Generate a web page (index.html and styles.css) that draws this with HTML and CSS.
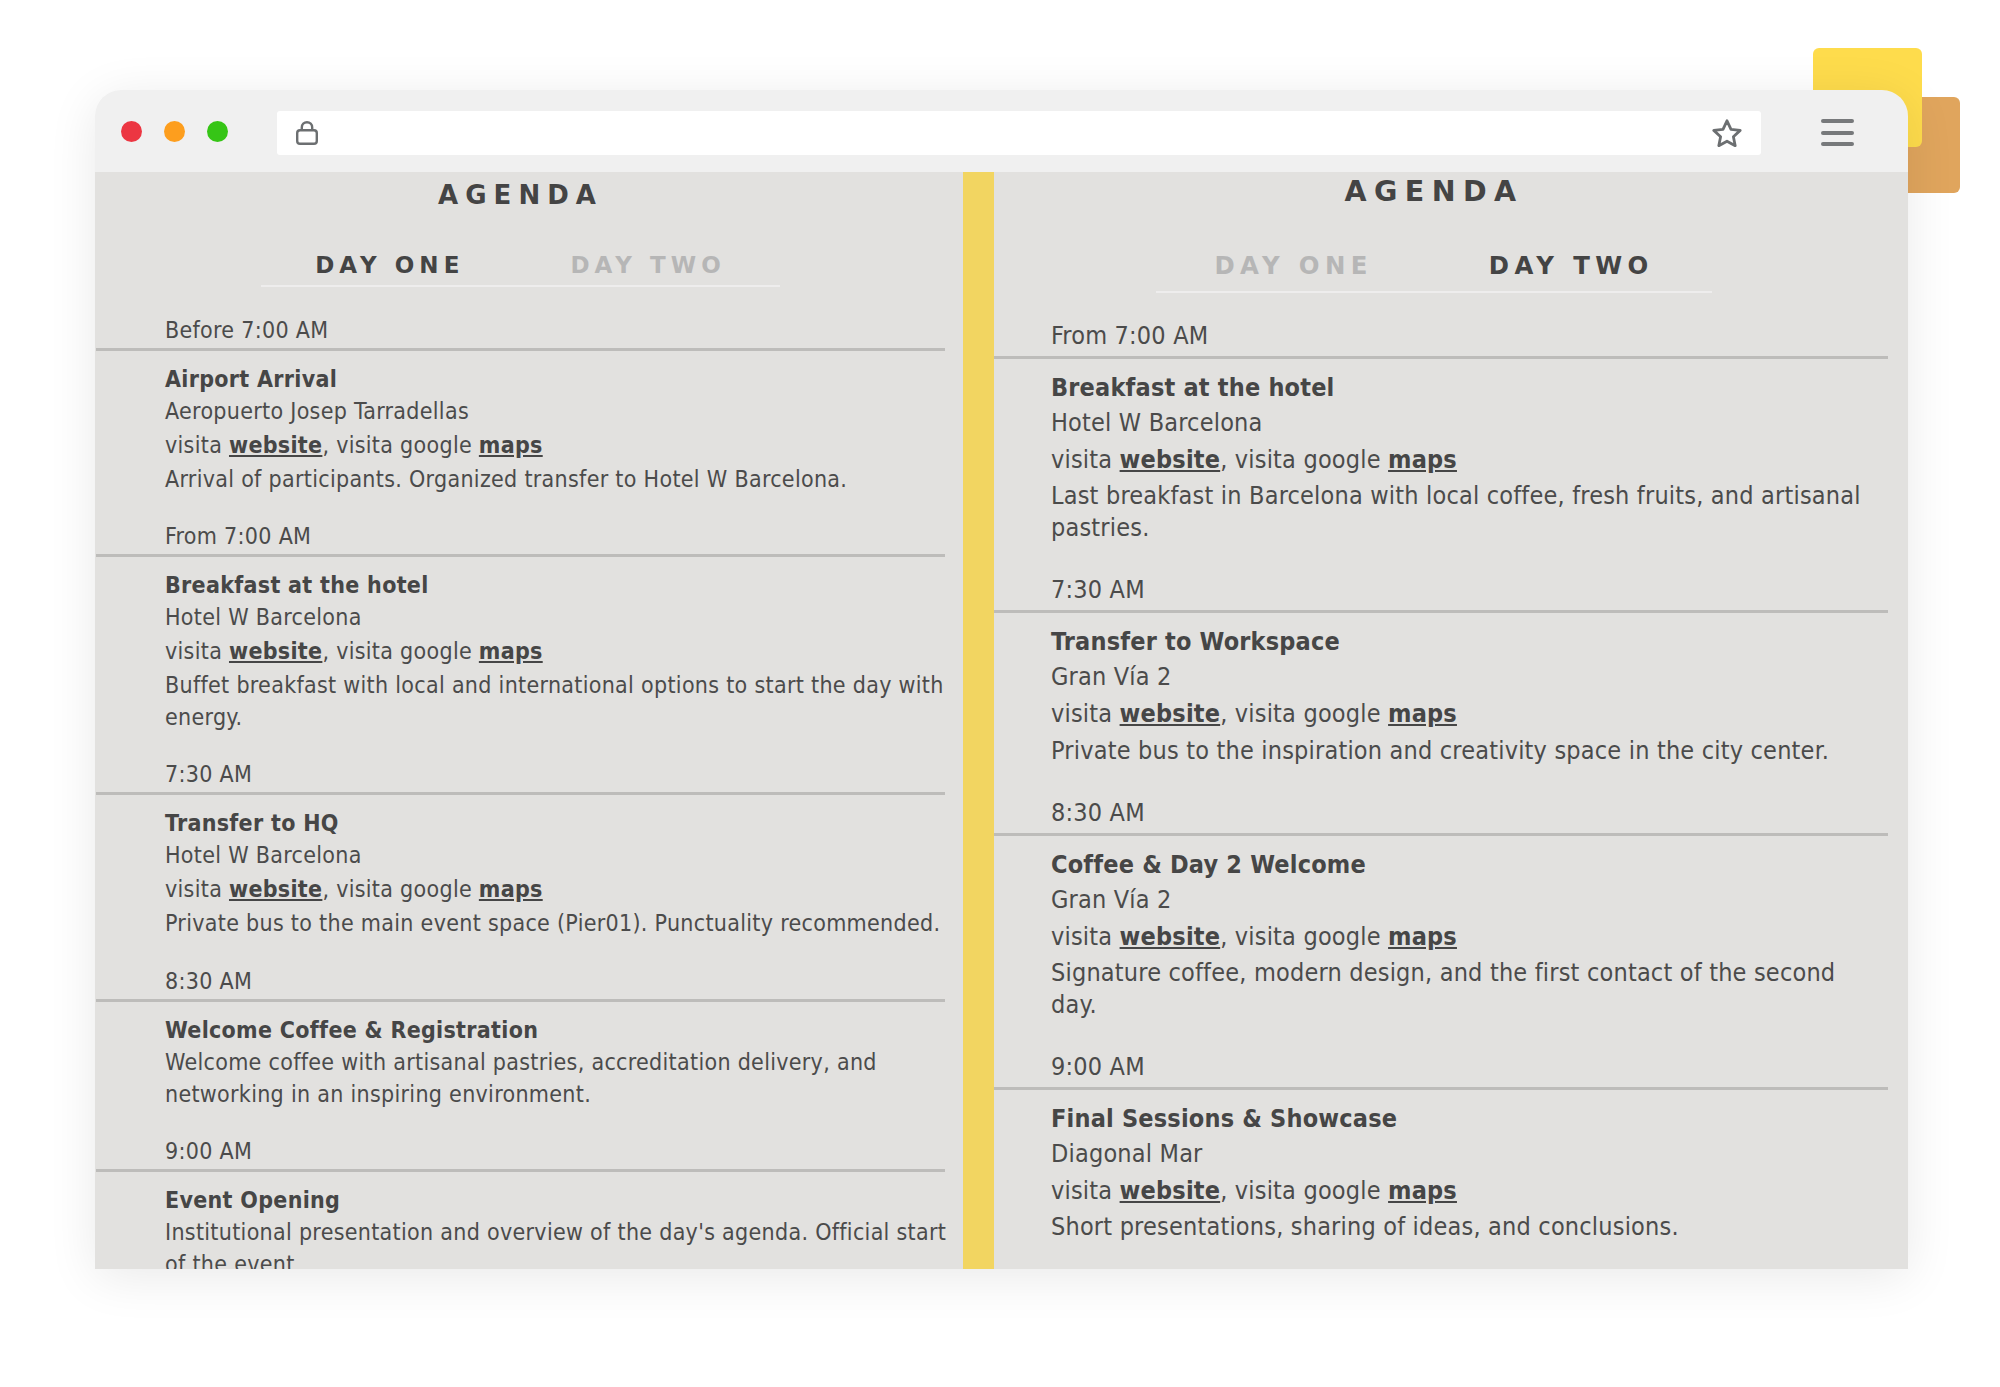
FILE: index.html
```html
<!DOCTYPE html>
<html lang="en">
<head>
<meta charset="utf-8">
<title>Agenda</title>
<link rel="stylesheet" href="styles.css">
</head>
<body>
<div class="stage">
  <div class="note note-orange"></div>
  <div class="note note-yellow"></div>
  <div class="window">
    <header class="chrome">
      <div class="lights"><span class="light red"></span><span class="light amber"></span><span class="light green"></span></div>
      <div class="address">
        <svg class="lock" viewBox="0 0 22 24" fill="none" stroke="currentColor" stroke-width="2.4" stroke-linejoin="round"><rect x="1.2" y="9.2" width="19.6" height="13.6" rx="2.8"/><path d="M5.8 9V6.4a5.2 5.2 0 0 1 10.4 0V9"/></svg>
        <svg class="star" viewBox="0 0 30 28" fill="none" stroke="currentColor" stroke-width="2.8" stroke-linejoin="round"><path d="M15 1.8l4 8.5 9.2 1.1-6.8 6.3 1.8 9-8.2-4.5-8.2 4.5 1.8-9-6.8-6.3 9.2-1.1z"/></svg>
      </div>
      <div class="burger"><span></span><span></span><span></span></div>
    </header>
    <main class="content">
      <section class="panel panel-left">
        <div class="head">
          <h1>AGENDA</h1>
          <nav class="tabs"><span class="tab on">DAY ONE</span><span class="tab">DAY TWO</span></nav>
        </div>
        <div class="slot first">
          <div class="time">Before 7:00 AM</div>
          <h2>Airport Arrival</h2>
          <p class="loc">Aeropuerto Josep Tarradellas</p>
          <p class="links">visita <a href="#">website</a>, visita google <a href="#">maps</a></p>
          <p class="desc">Arrival of participants. Organized transfer to Hotel W Barcelona.</p>
        </div>
        <div class="slot">
          <div class="time">From 7:00 AM</div>
          <h2>Breakfast at the hotel</h2>
          <p class="loc">Hotel W Barcelona</p>
          <p class="links">visita <a href="#">website</a>, visita google <a href="#">maps</a></p>
          <p class="desc">Buffet breakfast with local and international options to start the day with energy.</p>
        </div>
        <div class="slot">
          <div class="time">7:30 AM</div>
          <h2>Transfer to HQ</h2>
          <p class="loc">Hotel W Barcelona</p>
          <p class="links">visita <a href="#">website</a>, visita google <a href="#">maps</a></p>
          <p class="desc">Private bus to the main event space (Pier01). Punctuality recommended.</p>
        </div>
        <div class="slot">
          <div class="time">8:30 AM</div>
          <h2>Welcome Coffee &amp; Registration</h2>
          <p class="desc">Welcome coffee with artisanal pastries, accreditation delivery, and networking in an inspiring environment.</p>
        </div>
        <div class="slot">
          <div class="time">9:00 AM</div>
          <h2>Event Opening</h2>
          <p class="desc">Institutional presentation and overview of the day's agenda. Official start of the event.</p>
        </div>
      </section>
      <div class="divider"></div>
      <section class="panel panel-right">
        <div class="head">
          <h1>AGENDA</h1>
          <nav class="tabs"><span class="tab">DAY ONE</span><span class="tab on">DAY TWO</span></nav>
        </div>
        <div class="slot first">
          <div class="time">From 7:00 AM</div>
          <h2>Breakfast at the hotel</h2>
          <p class="loc">Hotel W Barcelona</p>
          <p class="links">visita <a href="#">website</a>, visita google <a href="#">maps</a></p>
          <p class="desc">Last breakfast in Barcelona with local coffee, fresh fruits, and artisanal pastries.</p>
        </div>
        <div class="slot">
          <div class="time">7:30 AM</div>
          <h2>Transfer to Workspace</h2>
          <p class="loc">Gran Vía 2</p>
          <p class="links">visita <a href="#">website</a>, visita google <a href="#">maps</a></p>
          <p class="desc">Private bus to the inspiration and creativity space in the city center.</p>
        </div>
        <div class="slot">
          <div class="time">8:30 AM</div>
          <h2>Coffee &amp; Day 2 Welcome</h2>
          <p class="loc">Gran Vía 2</p>
          <p class="links">visita <a href="#">website</a>, visita google <a href="#">maps</a></p>
          <p class="desc">Signature coffee, modern design, and the first contact of the second day.</p>
        </div>
        <div class="slot">
          <div class="time">9:00 AM</div>
          <h2>Final Sessions &amp; Showcase</h2>
          <p class="loc">Diagonal Mar</p>
          <p class="links">visita <a href="#">website</a>, visita google <a href="#">maps</a></p>
          <p class="desc">Short presentations, sharing of ideas, and conclusions.</p>
        </div>
      </section>
    </main>
  </div>
</div>
</body>
</html>
```
FILE: styles.css
```css
* { box-sizing: border-box; }
html, body { margin: 0; padding: 0; background: #fff; }
body { font-family: "DejaVu Sans", "Noto Sans", sans-serif; font-stretch: condensed; color: #4b4b4b; }
.stage { position: relative; width: 2000px; height: 1387px; padding: 90px 92px 0 95px; overflow: hidden; }
.note { position: absolute; }
.note-yellow { left: 1813px; top: 48px; width: 109px; height: 99px; background: #fedc4c; border-radius: 6px; }
.note-orange { left: 1860px; top: 97px; width: 100px; height: 96px; background: #e0a55d; border-radius: 6px; }
.window { position: relative; width: 1813px; border-radius: 26px 26px 0 0; box-shadow: 0 8px 50px rgba(0,0,0,.09); }
.chrome { display: flex; align-items: center; height: 82px; background: #f0f0f0; border-radius: 26px 26px 0 0; padding: 0 54px 0 25px; }
.lights { display: flex; gap: 22.4px; width: 157px; margin-top: 1px; padding-left: .5px; }
.light { width: 21px; height: 21px; border-radius: 50%; }
.red { background: #ec3642; }
.amber { background: #fd9e1e; }
.green { background: #36c516; }
.address { flex: 0 0 1484px; height: 44px; margin-top: 4px; background: #fff; border-radius: 3px; display: flex; align-items: center; justify-content: space-between; padding: 0 19px; color: #6c6f71; }
.lock { width: 22px; height: 24px; }
.star { width: 30px; height: 28px; }
.burger { margin-left: 60px; width: 33px; display: flex; flex-direction: column; gap: 7.5px; margin-top: 3px; }
.burger span { display: block; height: 4px; border-radius: 2px; background: #77797b; }
.content { display: flex; height: 1097px; background: #e2e1df; overflow: hidden; }
.divider { flex: 0 0 31px; background: #f2d561; }
.panel { overflow: hidden; }
.panel-left { flex: 0 0 868px; padding: 0 18px 0 1px; font-size: 23px; letter-spacing: .3px; }
.panel-right { flex: 0 0 914px; padding: 0 20px 0 0; font-size: 25px; letter-spacing: .19px; }
.head { display: flex; flex-direction: column; align-items: center; }
.panel-right .head { padding-right: 14px; }
h1 { margin: 0; font-weight: 700; color: #444; font-stretch: normal; }
.panel-left h1 { padding-top: 6px; line-height: 34px; font-size: 26px; letter-spacing: .27em; }
.panel-right h1 { padding-top: 2px; line-height: 36px; font-size: 28.5px; letter-spacing: .26em; }
.tabs { display: inline-flex; border-bottom: 2px solid #eeeded; }
.panel-left .tabs { margin-top: 40px; gap: 106px; padding: 0 54px 7px; }
.panel-right .tabs { margin-top: 43px; gap: 116px; padding: 0 58px 12px; }
.tab { line-height: 26px; font-weight: 700; color: #b6b6b6; font-stretch: normal; }
.panel-left .tab { font-size: 23px; letter-spacing: .22em; }
.panel-right .tab { font-size: 24.4px; letter-spacing: .22em; }
.tab.on { color: #444; }
.slot { margin-top: 25.2px; }
.first { margin-top: 27px; }
.panel-right .slot { margin-top: 29.2px; }
.panel-right .first { margin-top: 26px; }
.time { line-height: 32px; padding-left: 69px; border-bottom: 3px solid #bdbcba; padding-bottom: 2px; }
.panel-right .time { padding-left: 57px; padding-bottom: 3px; line-height: 34px; }
h2, p { margin: 0; padding-left: 69px; }
.panel-right h2, .panel-right p { padding-left: 57px; }
h2 { font-size: inherit; font-weight: 700; line-height: 32px; margin-top: 12px; color: #464646; }
.panel-right h2 { line-height: 34px; margin-top: 12px; }
.loc { line-height: 32px; }
.links { line-height: 36px; }
.panel-right .loc { line-height: 35px; }
.panel-right .links { line-height: 39px; }
.desc { line-height: 32px; }
.panel-left .desc { margin-right: -10px; }
.panel-right .desc { margin-top: 1.2px; }
.links a { color: #464646; font-weight: 700; }
```
